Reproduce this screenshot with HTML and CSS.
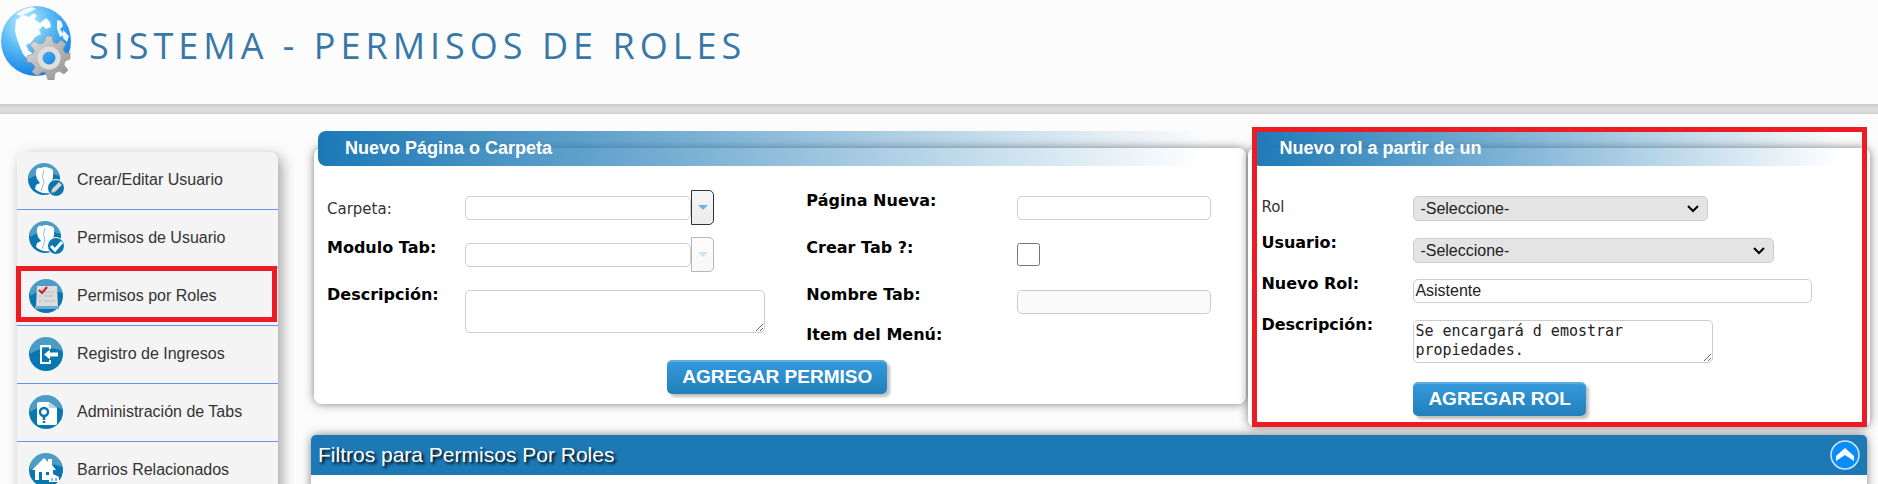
FILE: index.html
```html
<!DOCTYPE html>
<html lang="es">
<head>
    <meta charset="UTF-8">
    <meta name="viewport" content="width=device-width, initial-scale=1.0">
    <title>Sistema - Permisos de Roles</title>
    <link rel="stylesheet" href="styles.css">
</head>
<body>
    <header class="header">
        <svg class="logo" viewBox="0 0 72 74" aria-hidden="true">
            <defs>
                <radialGradient id="globe" cx="35%" cy="25%" r="80%">
                    <stop offset="0" stop-color="#c4f0ff"/>
                    <stop offset=".45" stop-color="#5cbcf5"/>
                    <stop offset="1" stop-color="#0b7be4"/>
                </radialGradient>
                <linearGradient id="gear" x1="0" y1="0" x2="1" y2="1">
                    <stop offset="0" stop-color="#e2e2e2"/>
                    <stop offset="1" stop-color="#8d8d8d"/>
                </linearGradient>
            </defs>
            <circle cx="36" cy="35" r="35" fill="url(#globe)"/>
            <path d="M16 14l7-5 6 2 5-4 3 3-3 3 6 4 6-5 4 4 1 5-5 2-3-3-4 4 2 4-6 3-4 6-5 2 3 6 6 4 2 6-3 4-6-5-5-6-3-7-3-8-2-8z" fill="#fff" fill-opacity=".95"/>
            <path d="M16 8l8-5 8-2 4 2-8 4-8 3zM57 14l4 1 2 5-3 3 4 6-4 2-3-8zM63 24l6 6-2 6-4-4z" fill="#fff" fill-opacity=".9"/>
            <g fill="url(#gear)" stroke="#8f8f8f" stroke-width=".6">
                <path fill-rule="evenodd" d="M46 30l6 0 1 6 4 2 4-4 5 4-3 5 2 4h5v6l-5 2-1 4 4 5-4 4-5-3-4 2-1 7h-6l-2-7-4-1-5 4-5-4 3-5-2-4-6-1v-6l6-2 1-4-4-5 4-4 6 3 4-2zM49 45a7 7 0 1 0 .1 14 7 7 0 1 0-.1-14z"/>
            </g>
            <circle cx="49" cy="52" r="9" fill="none" stroke="#dedede" stroke-width="5"/>
        </svg>
        <h1 class="title">Sistema - Permisos de Roles</h1>
    </header>
    <div class="divider"></div>

    <main class="main">
        <nav class="sidebar">
            <a class="item" href="#">
                <svg class="icon" viewBox="0 0 36 36" aria-hidden="true">
                    <circle cx="16" cy="17" r="16" fill="#0877b0"/>
                    <path d="M1 14a15 14 0 0 1 30 0Q16 8 1 17z" fill="#fff" fill-opacity=".28"/>
                    <path d="M8 9q1-4 5-3 4-2 8 0 5 0 4 6 1 5-3 8l1 3 4 2-6 6q-9 1-14-4l1-4 4-2q-5-5-4-12z" fill="#fff"/>
                    <path d="M16 8q-3 7 0 12l-3 9" fill="none" stroke="#8fbfdb"/>
                    <circle cx="28" cy="26" r="8.500" fill="#0877b0" stroke="#fff"/>
                    <path d="M23 31l1-4 7-7 3 3-7 7z" fill="#d5d5d5" stroke="#888" stroke-width=".6"/>
                </svg>
                <span>Crear/Editar Usuario</span>
            </a>
            <a class="item" href="#">
                <svg class="icon" viewBox="0 0 36 36" aria-hidden="true">
                    <circle cx="17" cy="17" r="16" fill="#0877b0"/>
                    <path d="M2 14a15 14 0 0 1 30 0Q17 8 2 17z" fill="#fff" fill-opacity=".28"/>
                    <path d="M9 9q1-4 5-3 4-2 8 0 5 0 4 6 1 5-3 8l1 3 4 2-6 6q-9 1-14-4l1-4 4-2q-5-5-4-12z" fill="#fff"/>
                    <path d="M17 8q-3 7 0 12l-3 9" fill="none" stroke="#8fbfdb"/>
                    <circle cx="28" cy="26" r="8.500" fill="#0877b0" stroke="#fff"/>
                    <path d="M23 26l4 4 7-8" fill="none" stroke="#fff" stroke-width="3"/>
                </svg>
                <span>Permisos de Usuario</span>
            </a>
            <a class="item active" href="#">
                <svg class="icon" viewBox="0 0 36 36" aria-hidden="true">
                    <circle cx="18" cy="18" r="17" fill="#0877b0"/>
                    <path d="M2 15a16 15 0 0 1 32 0Q18 8 2 18z" fill="#fff" fill-opacity=".28"/>
                    <path d="M9 8h20l1 21H8z" fill="#dcdcdc"/>
                    <path d="M7 28h24v3H7z" fill="#6fadd0"/>
                    <path d="M17 14h9M16 18h9M16 23h11M11 18h2M11 23h2" stroke="#bbb"/>
                    <path d="M11 12l3 3 5-6" fill="none" stroke="#c8202c" stroke-width="2"/>
                </svg>
                <span>Permisos por Roles</span>
            </a>
            <a class="item" href="#">
                <svg class="icon" viewBox="0 0 36 36" aria-hidden="true">
                    <circle cx="18" cy="18" r="17" fill="#0877b0"/>
                    <path d="M2 15a16 15 0 0 1 32 0Q18 8 2 18z" fill="#fff" fill-opacity=".28"/>
                    <path d="M22 13v-3H13v17h9v-3" fill="none" stroke="#fff" stroke-width="2"/>
                    <path d="M16 18.500l6-5v3h8v4h-8v3z" fill="#fff"/>
                </svg>
                <span>Registro de Ingresos</span>
            </a>
            <a class="item" href="#">
                <svg class="icon" viewBox="0 0 36 36" aria-hidden="true">
                    <circle cx="18" cy="18" r="17" fill="#0877b0"/>
                    <path d="M2 15a16 15 0 0 1 32 0Q18 8 2 18z" fill="#fff" fill-opacity=".28"/>
                    <path d="M11 8h10l8 6v15q0 2-2 2H11q-2 0-2-2V10q0-2 2-2z" fill="#fff"/>
                    <path d="M21 8v6h8z" fill="#b9d7e7"/>
                    <circle cx="16" cy="18" r="4" fill="none" stroke="#0877b0" stroke-width="2.500"/>
                    <path d="M16 22v4M16 27v2" stroke="#0877b0" stroke-width="2.500"/>
                </svg>
                <span>Administración de Tabs</span>
            </a>
            <a class="item" href="#">
                <svg class="icon" viewBox="0 0 36 36" aria-hidden="true">
                    <circle cx="18" cy="18" r="17" fill="#0877b0"/>
                    <path d="M2 15a16 15 0 0 1 32 0Q18 8 2 18z" fill="#fff" fill-opacity=".28"/>
                    <path d="M4 18L16 6l4 4V7h4v6l4 5h-3v10H7V18z" fill="#fff"/>
                    <path d="M11 20h3v8h-3zM18 20h3v3h-3z" fill="#0877b0"/>
                    <path d="M21 25l4-3 6 3v5H21z" fill="#fff"/>
                    <path d="M24 26v3M28 26v3" stroke="#0877b0"/>
                </svg>
                <span>Barrios Relacionados</span>
            </a>
        </nav>

        <div class="content">
            <div class="panels">
                <fieldset class="panel">
                    <legend>Nuevo Página o Carpeta</legend>
                    <form class="form form-pagina">
                        <label class="plain" for="carpeta">Carpeta:</label>
                        <div class="combo">
                            <input class="field" type="text" id="carpeta">
                            <button class="combo-btn" type="button" aria-label="Abrir lista de carpetas"></button>
                        </div>
                        <label for="pagina">Página Nueva:</label>
                        <input class="field w-short" type="text" id="pagina">

                        <label for="modulo">Modulo Tab:</label>
                        <div class="combo">
                            <input class="field" type="text" id="modulo">
                            <button class="combo-btn" type="button" aria-label="Abrir lista de módulos" disabled></button>
                        </div>
                        <label for="crear-tab">Crear Tab ?:</label>
                        <input class="check" type="checkbox" id="crear-tab">

                        <label for="descripcion">Descripción:</label>
                        <textarea class="field area" id="descripcion"></textarea>
                        <label for="nombre-tab">Nombre Tab:</label>
                        <input class="field w-short" type="text" id="nombre-tab" disabled>

                        <span class="label item-menu">Item del Menú:</span>
                        <button class="btn btn-center" type="button">AGREGAR PERMISO</button>
                    </form>
                </fieldset>

                <div class="marked">
                    <fieldset class="panel">
                        <legend>Nuevo rol a partir de un</legend>
                        <form class="form form-rol">
                            <label class="plain" for="rol">Rol</label>
                            <select class="field w-rol" id="rol">
                                <option>-Seleccione-</option>
                            </select>
                            <label for="usuario">Usuario:</label>
                            <select class="field w-usuario" id="usuario">
                                <option>-Seleccione-</option>
                            </select>
                            <label for="nuevo-rol">Nuevo Rol:</label>
                            <input class="field w-nuevo" type="text" id="nuevo-rol" value="Asistente">
                            <label for="descripcion-rol">Descripción:</label>
                            <textarea class="field area" id="descripcion-rol">Se encargará d emostrar propiedades.</textarea>
                            <button class="btn" type="button">AGREGAR ROL</button>
                        </form>
                    </fieldset>
                </div>
            </div>

            <section class="filters">
                <div class="filters-head">
                    <h2>Filtros para Permisos Por Roles</h2>
                    <button class="toggle" type="button" aria-label="Contraer">
                        <svg viewBox="0 0 30 30" aria-hidden="true">
                            <circle cx="15" cy="15" r="14" fill="#0a8dfb" stroke="#cfe8fb" stroke-width="1.500"/>
                            <path d="M6 16l9-8 9 8v5l-9-6-9 6z" fill="#fff"/>
                        </svg>
                    </button>
                </div>
                <div class="filters-body"></div>
            </section>
        </div>
    </main>
</body>
</html>
```
FILE: styles.css
```css
* {
    box-sizing: border-box;
}
body {
    margin: 0;
    height: 100vh;
    overflow: hidden;
    background-color: #fcfcfc;
    font-family: Arial, "Liberation Sans", sans-serif;
    font-size: 16px;
    color: #000;
}

/* Cabecera */
.header {
    display: flex;
    align-items: flex-start;
    height: 104px;
    padding-top: 6px;
}
.logo {
    width: 72px;
    height: 74px;
}
.title {
    margin: 15px 0 0 17px;
    font-family: "Segoe UI", "Open Sans", sans-serif;
    font-size: 36px;
    font-weight: 400;
    line-height: 50px;
    letter-spacing: 5px;
    text-transform: uppercase;
    white-space: nowrap;
    color: #3778a8;
}
.divider {
    height: 10px;
    background: linear-gradient(#c9c9c9, #dcdcdc 40%, #dadada 80%, #cecece);
}

.main {
    display: flex;
    align-items: flex-start;
    padding: 0 8px 0 17px;
}

/* Menu lateral */
.sidebar {
    flex: none;
    width: 261px;
    margin-top: 38px;
    background-color: #f4f4f4;
    border-radius: 8px 8px 0 0;
    box-shadow: 4px 4px 14px rgba(0, 0, 0, 0.35);
}
.item {
    position: relative;
    display: flex;
    align-items: center;
    gap: 13px;
    height: 58px;
    padding: 0 11px 2px;
    border-bottom: 1px solid #6495ed;
    color: #333;
    text-decoration: none;
}
.icon {
    width: 36px;
    height: 36px;
}
.active::after {
    content: "";
    position: absolute;
    inset: -2px 1px 3px -1px;
    border: 5px solid #ed1c24;
}

.content {
    flex: 1;
    min-width: 0;
    margin: 17px 0 0 33px;
}
.panels {
    display: grid;
    grid-template-columns: 3fr 2fr;
    gap: 2px;
    align-items: start;
    margin-left: 3px;
}
.panel {
    min-width: 0;
    margin: 0;
    padding: 0 3px;
    background-color: #fff;
    border: 1px solid #fff;
    border-radius: 8px;
    box-shadow: 0 0 10px rgba(0, 0, 0, 0.5);
}
legend {
    width: 96%;
    height: 35px;
    padding: 0 27px;
    background: linear-gradient(to right, #1c79b6, rgba(255, 255, 255, 0));
    border-radius: 8px 0 0 8px;
    color: #fff;
    font-size: 18px;
    font-weight: bold;
    line-height: 34px;
}
.marked {
    position: relative;
    min-width: 0;
}
.marked::after {
    content: "";
    position: absolute;
    inset: -4px 3px 0 4px;
    border: 5px solid #ed1c24;
    pointer-events: none;
}

/* Formularios */
.form {
    display: grid;
    align-items: start;
    padding: 24px 15px 9px 9px;
}
.form-pagina {
    grid-template-columns: 138px minmax(0, 13fr) 211px minmax(0, 8fr);
    grid-template-rows: 47px 47px 40px 36px auto;
}
.form-rol {
    grid-template-columns: 152px minmax(0, 1fr);
    grid-template-rows: 42px 41px 41px 62px auto;
    padding-bottom: 10px;
}
label,
.label {
    font-family: Verdana, "DejaVu Sans", sans-serif;
    font-weight: bold;
    line-height: 22px;
}
.plain {
    padding-top: 6px;
    font-size: 15px;
    font-weight: normal;
    color: #333;
}
.form-pagina .plain {
    padding-top: 8px;
}
.field {
    max-width: 100%;
    height: 24px;
    margin: 6px 0 0;
    padding: 1px;
    background-color: #fff;
    border: 1px solid #ccc;
    border-radius: 5px;
    font-family: Arial, "Liberation Sans", sans-serif;
    font-size: 16px;
    color: #222;
}
.field:disabled {
    background-color: #fafafa;
}
select.field {
    height: 25px;
    padding: 0 24px 0 6px;
    appearance: none;
    background: #e4e4e4 url("data:image/svg+xml,%3Csvg xmlns='http://www.w3.org/2000/svg' width='14' height='8'%3E%3Cpath d='M2 1l5 5 5-5' fill='none' stroke='black' stroke-width='2'/%3E%3C/svg%3E") no-repeat right 7px center;
}
.area {
    width: 300px;
    height: 43px;
    font-family: Consolas, "DejaVu Sans Mono", monospace;
    font-size: 15px;
    line-height: 19px;
}
.form-pagina .area {
    grid-row: 3 / span 2;
    grid-column: 2;
}
.item-menu {
    grid-row: 4;
    grid-column: 3;
}
.w-short {
    width: 194px;
}
.w-rol {
    width: 295px;
}
.w-usuario {
    width: 361px;
}
.w-nuevo {
    width: 399px;
}
.check {
    width: 23px;
    height: 23px;
    margin: 6px 0 0;
}
.combo {
    display: flex;
    align-items: center;
    height: 35px;
}
.combo .field {
    width: 226px;
    margin: 0;
}
.combo-btn {
    display: flex;
    align-items: center;
    justify-content: center;
    width: 23px;
    height: 35px;
    padding: 0;
    background: linear-gradient(#f6f6f6, #ececec);
    border: 1px solid #333;
    border-radius: 0 5px 5px 0;
}
.combo-btn::after {
    content: "";
    border: 5px solid transparent;
    border-top-color: #6db3e6;
    border-bottom: 0;
}
.combo-btn:disabled {
    opacity: 0.35;
}
.btn {
    grid-column: 2;
    justify-self: start;
    height: 34px;
    margin-top: 6px;
    padding: 0 15px 2px;
    background: linear-gradient(#3498db, #2180ba);
    border: 0;
    border-top: 2px solid #5dade2;
    border-radius: 5px;
    box-shadow: 3px 3px 3px rgba(0, 0, 0, 0.25);
    color: #fff;
    font-family: Arial, "Liberation Sans", sans-serif;
    font-size: 19px;
    font-weight: bold;
}
.btn-center {
    grid-column: 1 / -1;
    justify-self: center;
    margin-top: 0;
}

/* Filtros */
.filters {
    margin: 8px 3px 0 0;
    border-radius: 8px 8px 0 0;
    box-shadow: 0 0 10px rgba(0, 0, 0, 0.5);
}
.filters-head {
    display: flex;
    align-items: center;
    justify-content: space-between;
    height: 40px;
    padding: 0 7px;
    background-color: #1c79b6;
    border-radius: 5px 5px 0 0;
}
.filters-head h2 {
    margin: 0;
    color: #fff;
    font-size: 21px;
    font-weight: normal;
    text-shadow: 2px 2px 3px #000;
}
.toggle {
    width: 30px;
    height: 30px;
    padding: 0;
    background: none;
    border: 0;
}
.toggle svg {
    display: block;
}
.filters-body {
    height: 60px;
    background-color: #fff;
}
```
